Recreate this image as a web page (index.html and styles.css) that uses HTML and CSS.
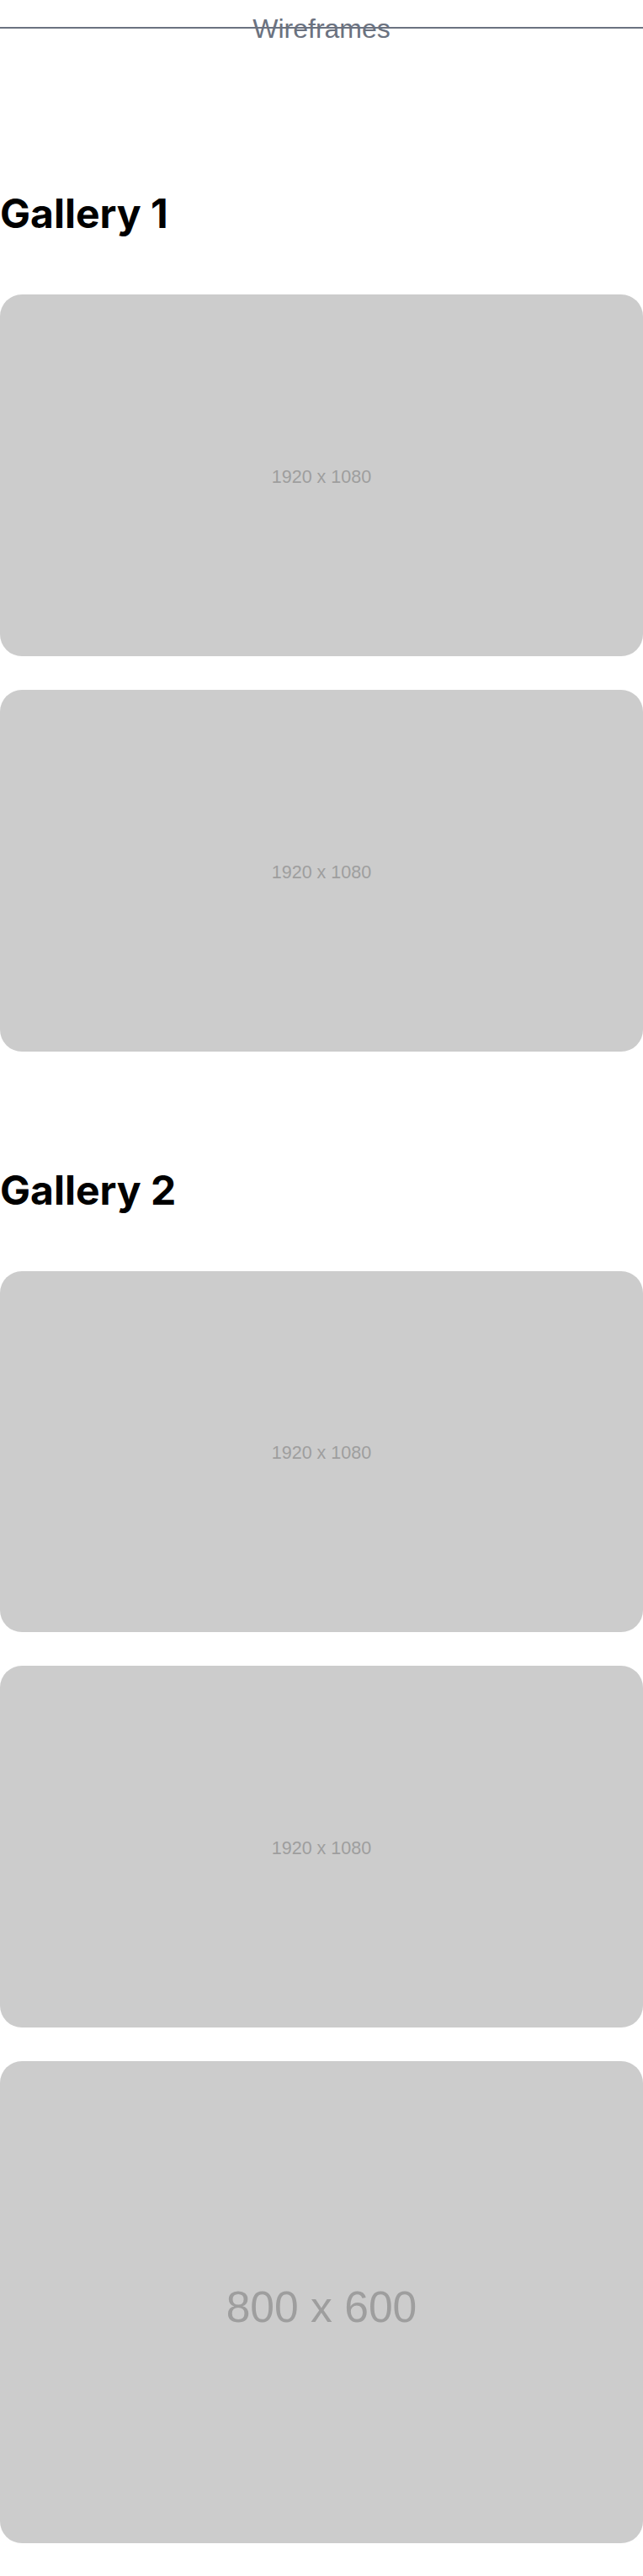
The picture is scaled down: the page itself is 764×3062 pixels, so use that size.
FILE: index.html
```html
<!DOCTYPE html>
<html lang="en">
<head>
<meta charset="utf-8">
<title>Wireframes</title>
<link rel="stylesheet" href="styles.css">
</head>
<body>
<header class="topbar">
  <span class="topbar-title">Wireframes</span>
</header>
<main class="page">
  <section class="gallery">
    <h2 class="gallery-title">Gallery 1</h2>
    <div class="gallery-list">
      <div class="ph ph-wide"><span class="ph-label">1920 x 1080</span></div>
      <div class="ph ph-wide"><span class="ph-label">1920 x 1080</span></div>
    </div>
  </section>
  <section class="gallery">
    <h2 class="gallery-title">Gallery 2</h2>
    <div class="gallery-list">
      <div class="ph ph-wide"><span class="ph-label">1920 x 1080</span></div>
      <div class="ph ph-wide"><span class="ph-label">1920 x 1080</span></div>
      <div class="ph ph-std"><span class="ph-label ph-label-lg">800 x 600</span></div>
    </div>
  </section>
</main>
</body>
</html>
```

FILE: styles.css
```css
* {
  box-sizing: border-box;
}

html, body {
  margin: 0;
  padding: 0;
  background: #ffffff;
}

body {
  font-family: "Liberation Sans", Arial, sans-serif;
}

.topbar {
  display: flex;
  justify-content: center;
  padding-top: 18px;
  height: 50px;
  background: linear-gradient(#6b7280, #6b7280) no-repeat 0 32px / 100% 2px;
}

.topbar-title {
  font-family: "Liberation Sans", Arial, sans-serif;
  font-size: 32px;
  line-height: 1;
  color: #6b7280;
}

.page {
  padding: 39px 0 39px;
}

.gallery {
  padding-top: 141px;
}

.gallery-title {
  margin: 0 0 72px;
  font-family: Inter, "Liberation Sans", sans-serif;
  font-weight: 700;
  font-size: 48px;
  line-height: 1;
  color: #000000;
}

.gallery-list {
  display: flex;
  flex-direction: column;
  gap: 40px;
}

.ph {
  display: flex;
  align-items: center;
  justify-content: center;
  width: 100%;
  background: #cccccc;
  border-radius: 26px;
}

.ph-wide {
  aspect-ratio: 16 / 9;
}

.ph-std {
  aspect-ratio: 4 / 3;
}

.ph-label {
  padding-top: 0.25em;
  font-family: "Liberation Sans", Arial, sans-serif;
  font-size: 21.5px;
  line-height: 1;
  color: #9e9e9e;
}

.ph-label-lg {
  font-size: 51.6px;
}
```
